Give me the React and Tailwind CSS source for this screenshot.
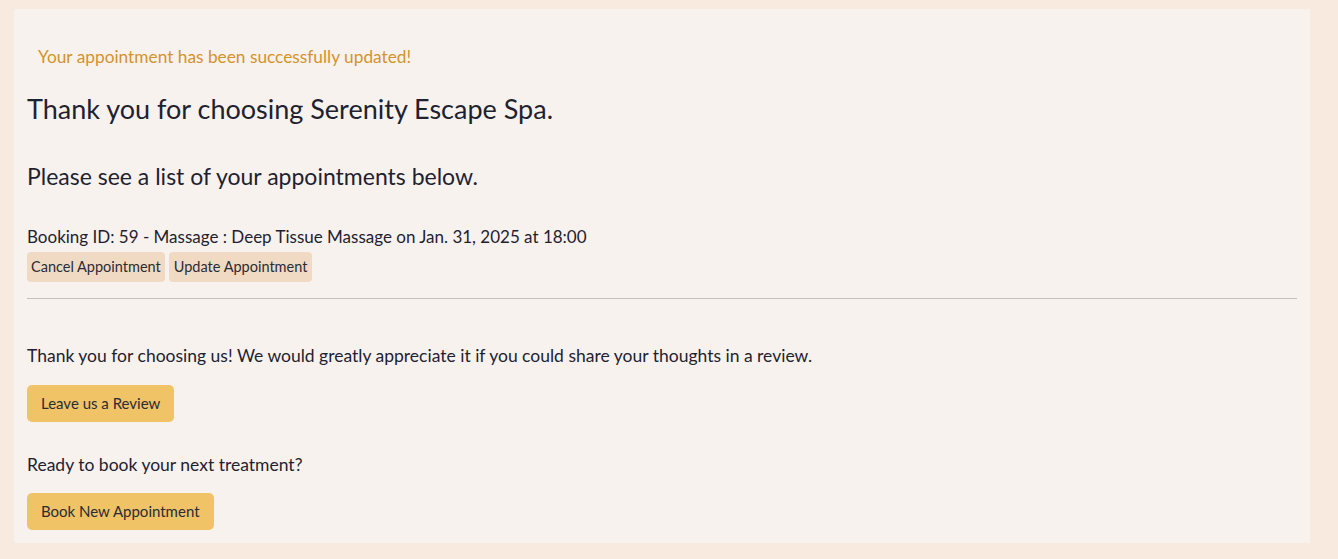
export default function App() {
  return (
    <div className="min-h-[559px] bg-[#f8eadf] pl-[14px] pr-[28px] pt-[9px] pb-4" style={{ fontFamily: 'Lato, "Open Sans", sans-serif' }}>
      <div className="bg-[#f8f2ee] px-[13px] pb-[13px] text-[#1e2230]">
        <div className="pt-[38px] pl-[11px] text-[17.3px] leading-[20px] text-[#d4922c]">
          Your appointment has been successfully updated!
        </div>
        <h1 className="mt-[26px] text-[27px] leading-[32px]">Thank you for choosing Serenity Escape Spa.</h1>
        <h2 className="mt-[37px] text-[23px] leading-[28px]">Please see a list of your appointments below.</h2>

        <div className="mt-[36px]">
          <p className="text-[17px] leading-[22px]">Booking ID: 59 - Massage : Deep Tissue Massage on Jan. 31, 2025 at 18:00</p>
          <div className="mt-[4px] flex gap-[4px]">
            <button className="h-[30px] rounded-[4px] bg-[#f0dac4] px-[4px] text-[14.5px] text-[#2a2c36]">Cancel Appointment</button>
            <button className="h-[30px] rounded-[4px] bg-[#f0dac4] px-[5px] text-[14.5px] text-[#2a2c36]">Update Appointment</button>
          </div>
        </div>
        <hr className="mt-[16px] border-t border-[#c4c0bd]" />

        <p className="mt-[46px] text-[17.5px] leading-[22px]">
          Thank you for choosing us! We would greatly appreciate it if you could share your thoughts in a review.
        </p>
        <button className="mt-[18px] h-[37px] rounded-[5px] bg-[#f0c366] px-[14px] text-[15px] text-[#2a2c36]">Leave us a Review</button>

        <p className="mt-[32px] text-[17.5px] leading-[22px]">Ready to book your next treatment?</p>
        <button className="mt-[17px] h-[37px] rounded-[5px] bg-[#f0c366] px-[14px] text-[15px] text-[#2a2c36]">Book New Appointment</button>
      </div>
    </div>
  );
}
